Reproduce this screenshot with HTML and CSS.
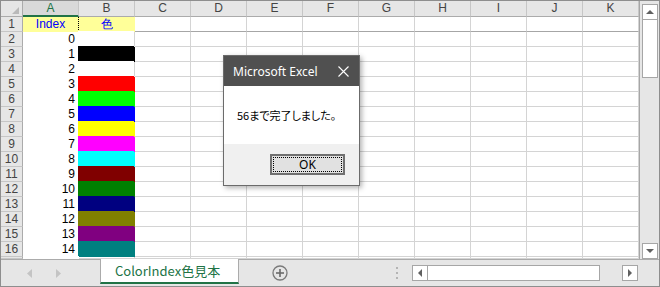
FILE: index.html
```html
<html>
<head>
	<title>ColorIndex色見本</title>
	<link rel="stylesheet" href="styles.css">
</head>
<body>

<div class="app">
	<div class="main">
		<div class="sheet" id="sheet"></div>

		<div class="vscroll">
			<div class="sbtn"><svg width="8" height="5"><polygon points="0,4 8,4 4,0" fill="#606060"/></svg></div>
			<div class="vthumb"></div>
			<div class="vtrack"></div>
			<div class="sbtn"><svg width="8" height="5"><polygon points="0,0 8,0 4,4" fill="#606060"/></svg></div>
		</div>
	</div>

	<div class="tabbar">
		<div class="tabnav">
			<svg width="6" height="9"><polygon points="5,0 5,9 0,4.5" fill="#c4c4c4"/></svg>
			<svg width="6" height="9"><polygon points="0,0 0,9 5,4.5" fill="#c4c4c4"/></svg>
		</div>
		<div class="tab">ColorIndex色見本</div>
		<div class="tabrest">
			<svg class="addsheet" width="16" height="16">
				<circle cx="8" cy="8" r="7" fill="none" stroke="#7a7a7a" stroke-width="1.3"/>
				<line x1="8" y1="4" x2="8" y2="12" stroke="#6a6a6a" stroke-width="1.6"/>
				<line x1="4" y1="8" x2="12" y2="8" stroke="#6a6a6a" stroke-width="1.6"/>
			</svg>
			<div class="dots"><span></span><span></span><span></span></div>
			<div class="hscroll">
				<div class="sbtn"><svg width="5" height="8"><polygon points="4,0 4,8 0,4" fill="#606060"/></svg></div>
				<div class="hthumb"></div>
				<div class="htrack"></div>
				<div class="sbtn"><svg width="5" height="8"><polygon points="0,0 0,8 4,4" fill="#606060"/></svg></div>
			</div>
		</div>
	</div>

	<!-- message box -->
	<div class="msgbox">
		<div class="msgtitle">
			<span>Microsoft Excel</span>
			<svg width="11" height="11"><path d="M0.5 0.5 L10.5 10.5 M10.5 0.5 L0.5 10.5" stroke="#fff" stroke-width="1.1"/></svg>
		</div>
		<div class="msgbody">56まで完了しました。</div>
		<div class="msgfoot">
			<div class="okbtn"><span>OK</span></div>
		</div>
	</div>
</div>

<script>
	var colors = ['#ffffff','#000000','#ffffff','#ff0000','#00ff00','#0000ff','#ffff00',
		'#ff00ff','#00ffff','#800000','#008000','#000080','#808000','#800080','#008080'];
	var letters = 'ABCDEFGHIJK';
	var sheet = document.getElementById('sheet');

	function cell(cls, text)
	{
		var d = document.createElement('div');
		d.className = cls;
		if (text) d.textContent = text;
		sheet.appendChild(d);
		return d;
	}

	// column headers
	var corner = cell('hd corner');
	corner.innerHTML = '<svg width="21" height="15"><polygon points="18,6 18,13 11,13" fill="#b9b9b9"/></svg>';
	for (var c = 0; c < letters.length; c++)
	{
		cell(c == 0 ? 'hd colhd sel' : 'hd colhd', letters[c]);
	}

	// row 1 titles
	cell('hd rowhd', '1');
	cell('cell title first', 'Index');
	cell('cell title', '色');
	for (var c = 2; c < letters.length; c++) cell('cell row1');

	// rows 2..17
	for (var r = 2; r <= 17; r++)
	{
		cell('hd rowhd', r == 17 ? '' : String(r));
		var i = r - 2;
		cell('cell idx', r == 17 ? '' : String(i));
		var sw = cell('cell swatch');
		if (r < 17)
		{
			var col = colors[i];
			sw.style.background = col;
			sw.style.borderBottomColor = col;
			sw.style.boxShadow = '-1px -1px 0 ' + col;
			if (col != '#ffffff') sw.style.borderRightColor = col;
		}
		for (var c = 2; c < letters.length; c++) cell('cell');
	}
</script>

</body>
</html>
```

FILE: styles.css
```css
body {
	margin: 0;
	background: #fff;
}

.app {
	position: relative;
	width: 660px;
	height: 287px;
	box-sizing: border-box;
	border: 1px solid #8e8e8e;
	background: #e6e6e6;
	display: flex;
	flex-direction: column;
	overflow: hidden;
	font-family: "Liberation Sans", Arial, sans-serif;
}

.main {
	display: flex;
	height: 258px;
}

/* grid */
.sheet {
	display: grid;
	grid-template-columns: 22px repeat(11, 56px);
	grid-template-rows: 16px repeat(16, 15px) 2px;
	width: 638px;
	height: 258px;
	overflow: hidden;
	background: #fff;
	font-size: 12px;
	line-height: 14px;
}

.hd {
	box-sizing: border-box;
	background: #e6e6e6;
	color: #444;
	text-align: center;
	border-right: 1px solid #c6c6c6;
	border-bottom: 1px solid #ababab;
	overflow: hidden;
}

.colhd {
	line-height: 15px;
}

.colhd.sel {
	color: #217346;
	background: #d9d9d9;
	border-bottom: 2px solid #217346;
}

.rowhd {
	border-right-color: #ababab;
	border-bottom-color: #c6c6c6;
}

.corner {
	border-right-color: #ababab;
}

.corner svg {
	display: block;
}

.cell {
	box-sizing: border-box;
	border-right: 1px solid #d4d4d4;
	border-bottom: 1px solid #d4d4d4;
	overflow: hidden;
	white-space: nowrap;
	color: #000;
}

.cell.row1 {
	border-bottom-color: #a6a6a6;
}

.cell.title {
	background: #ffff99;
	border-color: #ffff99;
	color: #0000ff;
	text-align: center;
}

.cell.title.first {
	border-right: 1px dotted #000;
}

.cell.idx {
	background: #fff;
	border-color: #fff;
	text-align: right;
	padding-right: 3px;
}

/* scroll bars */
.vscroll {
	width: 20px;
	box-sizing: border-box;
	border-left: 1px solid #a6a6a6;
	padding: 3px 1px 0 2px;
	display: flex;
	flex-direction: column;
}

.sbtn {
	width: 16px;
	height: 16px;
	box-sizing: border-box;
	border: 1px solid #a6a6a6;
	background: #fff;
	display: flex;
	align-items: center;
	justify-content: center;
	flex-shrink: 0;
}

.sbtn svg {
	display: block;
}

.vthumb {
	width: 16px;
	height: 58px;
	box-sizing: border-box;
	border: 1px solid #a6a6a6;
	border-top: none;
	background: #fff;
}

.vtrack {
	flex: 1;
}

/* sheet tabs */
.tabbar {
	display: flex;
	height: 27px;
}

.tabnav {
	width: 99px;
	box-sizing: border-box;
	border-top: 1px solid #ababab;
	display: flex;
	align-items: center;
	padding-left: 26px;
	gap: 23px;
}

.tabnav svg {
	display: block;
}

.tab {
	width: 139px;
	height: 25px;
	box-sizing: border-box;
	background: #fff;
	border-left: 1px solid #ababab;
	border-right: 1px solid #ababab;
	border-bottom: 2px solid #217346;
	color: #217346;
	font-family: "Noto Sans CJK JP", sans-serif;
	font-size: 13px;
	line-height: 23px;
	padding-left: 14px;
	white-space: nowrap;
}

.tabrest {
	flex: 1;
	box-sizing: border-box;
	border-top: 1px solid #ababab;
	display: flex;
	align-items: center;
}

.addsheet {
	display: block;
	margin-left: 33px;
}

.dots {
	margin-left: 108px;
	display: flex;
	flex-direction: column;
	gap: 3px;
}

.dots span {
	display: block;
	width: 2px;
	height: 2px;
	background: #b4b4b4;
}

.hscroll {
	margin-left: 14px;
	width: 226px;
	display: flex;
}

.hthumb {
	width: 172px;
	height: 16px;
	box-sizing: border-box;
	border: 1px solid #a6a6a6;
	border-left: none;
	background: #fff;
}

.htrack {
	flex: 1;
}

/* message box */
.msgbox {
	position: absolute;
	left: 222px;
	top: 54px;
	width: 137px;
	box-sizing: border-box;
	border: 1px solid #6b6b6b;
	background: #f0f0f0;
	box-shadow: 2px 2px 5px rgba(0, 0, 0, 0.3);
	font-family: "Noto Sans", sans-serif;
}

.msgtitle {
	height: 30px;
	background: #505050;
	color: #fff;
	font-size: 12px;
	display: flex;
	align-items: center;
	justify-content: space-between;
	padding: 0 10px 0 9px;
}

.msgtitle svg {
	display: block;
}

.msgbody {
	height: 58px;
	background: #fff;
	display: flex;
	align-items: center;
	padding-left: 13px;
	font-family: "Noto Sans CJK JP", sans-serif;
	font-size: 11px;
	font-feature-settings: "palt";
	color: #000;
}

.msgfoot {
	height: 41px;
	display: flex;
	justify-content: flex-end;
	align-items: flex-start;
	padding: 10px 14px 0 0;
	box-sizing: border-box;
}

.okbtn {
	width: 75px;
	height: 21px;
	box-sizing: border-box;
	border: 2px solid #707070;
	background: #e1e1e1;
	padding: 1px;
}

.okbtn span {
	display: block;
	height: 100%;
	box-sizing: border-box;
	border: 1px dotted #000;
	text-align: center;
	font-size: 12px;
	line-height: 13px;
	color: #000;
}
```
